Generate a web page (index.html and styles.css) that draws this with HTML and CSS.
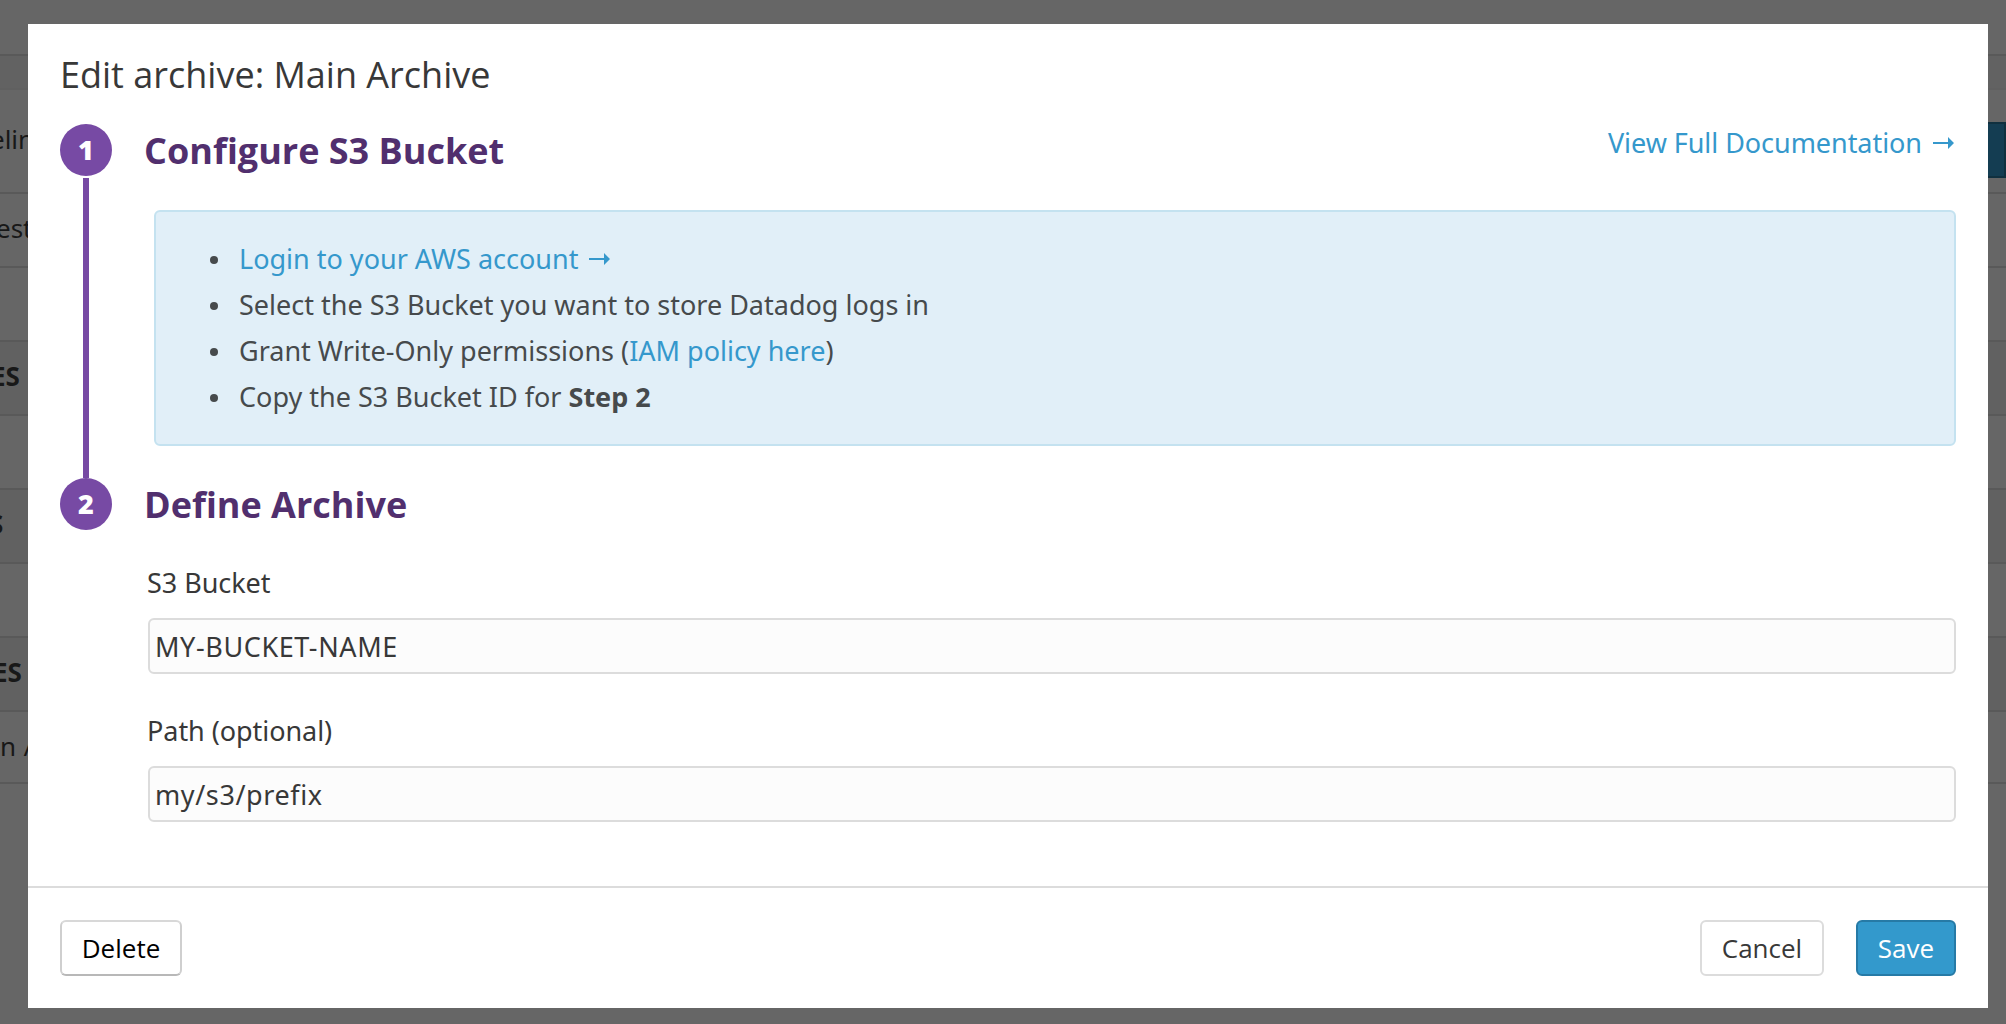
FILE: index.html
```html
<!DOCTYPE html>
<html lang="en">
<head>
<meta charset="utf-8">
<title>Edit archive</title>
<link rel="stylesheet" href="styles.css">
</head>
<body>
<div class="page">
  <div class="row row-top"></div>
  <div class="row row-bar"></div>
  <div class="row row-title"><span class="frag frag-title">elin</span><span class="page-button"></span></div>
  <div class="row"><span class="frag frag-test">est</span></div>
  <div class="row"></div>
  <div class="row row-head"><span class="frag frag-es">ES</span></div>
  <div class="row"></div>
  <div class="row row-head"><span class="frag frag-s">S</span></div>
  <div class="row"></div>
  <div class="row row-head"><span class="frag frag-es2">ES</span></div>
  <div class="row row-last"><span class="frag frag-main">n A</span></div>
</div>
<div class="overlay">
  <div class="modal">
    <div class="modal-body">
      <h1 class="title">Edit archive: Main Archive</h1>
      <section class="step">
        <div class="rail"><div class="badge">1</div><div class="line"></div></div>
        <div class="content">
          <div class="step-head">
            <h2 class="heading">Configure S3 Bucket</h2>
            <a class="link doc">View Full Documentation<svg class="arrow" viewBox="0 0 21 12"><path d="M0 5h15V0l6 6-6 6V7H0z"/></svg></a>
          </div>
          <ul class="info">
            <li class="item"><a class="link">Login to your AWS account<svg class="arrow" viewBox="0 0 21 12"><path d="M0 5h15V0l6 6-6 6V7H0z"/></svg></a></li>
            <li class="item"><span>Select the S3 Bucket you want to store Datadog logs in</span></li>
            <li class="item"><span>Grant Write-Only permissions (<a class="link">IAM policy here</a>)</span></li>
            <li class="item"><span>Copy the S3 Bucket ID for <b>Step 2</b></span></li>
          </ul>
        </div>
      </section>
      <section class="step">
        <div class="rail"><div class="badge">2</div></div>
        <div class="content">
          <h2 class="heading">Define Archive</h2>
          <form class="form">
            <label class="label" for="bucket">S3 Bucket</label>
            <input class="input" id="bucket" value="MY-BUCKET-NAME">
            <label class="label label-path" for="path">Path (optional)</label>
            <input class="input" id="path" value="my/s3/prefix">
          </form>
        </div>
      </section>
    </div>
    <footer class="footer">
      <button class="btn btn-delete">Delete</button>
      <button class="btn btn-cancel">Cancel</button>
      <button class="btn btn-save">Save</button>
    </footer>
  </div>
</div>
</body>
</html>
```
FILE: styles.css
```css
* { box-sizing: border-box; }
body { margin: 0; font-family: "Noto Sans", "Open Sans", sans-serif; font-size: 27px; color: #383838; background: #666; overflow: hidden; }
h1, h2, ul { margin: 0; padding: 0; }

.page { height: 1024px; color: #181818; overflow: hidden; }
.row { display: flex; height: 74px; border-bottom: 2px solid #595959; line-height: 68px; font-size: 26px; white-space: nowrap; }
.row-top { height: 56px; }
.row-bar { height: 34px; background: #626262; border-bottom-color: #606060; }
.row-title { height: 104px; line-height: 98px; justify-content: space-between; }
.row-head { background: #616161; font-weight: 700; }
.row-last { height: 72px; }
.page-button { width: 40px; height: 56px; margin-top: 32px; background: #143d52; border: 2px solid #10303f; }
.frag-title { margin-left: -10px; }
.frag-test { margin-left: -4px; }
.frag-es { margin-left: -9px; }
.frag-s { margin-left: -11px; }
.frag-es2 { margin-left: -7px; }
.frag-main { letter-spacing: .5px; }

.overlay { position: fixed; inset: 0; padding: 24px 18px 16px 28px; }
.modal { display: flex; flex-direction: column; height: 984px; background: #fff; }
.modal-body { flex: 1; padding: 25px 32px 0; }
.title { height: 75px; line-height: 52px; font-family: "Open Sans", sans-serif; font-size: 36px; font-weight: 400; }
.step { display: flex; gap: 34px; }
.rail { display: flex; flex-direction: column; align-items: center; gap: 2px; width: 52px; }
.badge { width: 52px; height: 52px; border-radius: 50%; background: #774aa4; color: #fff; font-family: "Open Sans", sans-serif; font-size: 27px; font-weight: 800; line-height: 52px; text-align: center; }
.line { flex: 1; width: 6px; background: #774aa4; }
.content { flex: 1; }
.step-head { display: flex; justify-content: space-between; height: 86px; }
.heading { height: 52px; margin-left: -2px; font-family: "Open Sans", sans-serif; font-size: 36px; font-weight: 700; line-height: 54px; color: #512f6e; }
.link { color: #3598cc; }
.doc { line-height: 38px; margin-right: 2px; letter-spacing: -.05px; }
.arrow { width: 21px; height: 12px; margin-left: 11px; vertical-align: 4px; fill: currentColor; }
.info { height: 236px; margin: 0 0 32px 8px; padding: 24px 0 0 54px; border: 2px solid #c4e2f0; border-radius: 6px; background: #e1eff8; color: #464a4c; line-height: 46px; list-style: none; }
.item { display: flex; align-items: center; gap: 21px; height: 46px; }
.item::before { content: ""; width: 8px; height: 8px; margin-top: 2px; border-radius: 50%; background: currentColor; }
.form { display: flex; flex-direction: column; padding: 34px 0 0 2px; }
.label { height: 54px; margin-left: -1px; line-height: 38px; letter-spacing: -.05px; }
.label-path { margin-top: 38px; }
.input { height: 56px; border: 2px solid #dcdcdc; border-radius: 6px; background: #fcfcfc; padding: 0 5px; font: inherit; color: inherit; letter-spacing: .6px; }
.footer { display: flex; height: 122px; padding: 32px; border-top: 2px solid #dcdcdc; }
.btn { height: 56px; border: 2px solid #dcdcdc; border-radius: 6px; background: #fff; font: 26px "Open Sans", sans-serif; color: #383838; padding: 0; }
.btn-delete { width: 122px; margin-right: auto; color: #000; border-color: #d8d8d8 #cfcfcf #b8b8b8; }
.btn-cancel { width: 124px; margin-right: 32px; }
.btn-save { width: 100px; background: #3399cc; border-color: #267aa6; color: #fff; }
```
